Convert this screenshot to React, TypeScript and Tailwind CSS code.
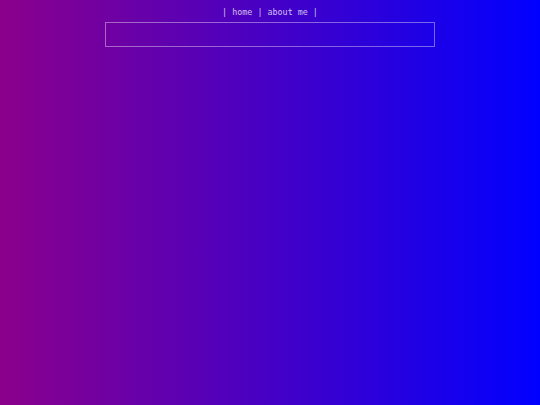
export default function App() {
  return (
    <div className="min-h-screen w-full bg-linear-to-r/srgb from-[#8b008b] to-[#0000ff] font-['DejaVu_Sans_Mono',monospace]">
      <div className="flex flex-col items-center pt-[7px]">
        <nav className="text-[8.4px] leading-[11px] text-white/75">
          | <span>home</span> | <span>about me</span> |
        </nav>
        <div className="mt-[4px] h-[25px] w-[330px] border border-white/40" />
      </div>
    </div>
  )
}
